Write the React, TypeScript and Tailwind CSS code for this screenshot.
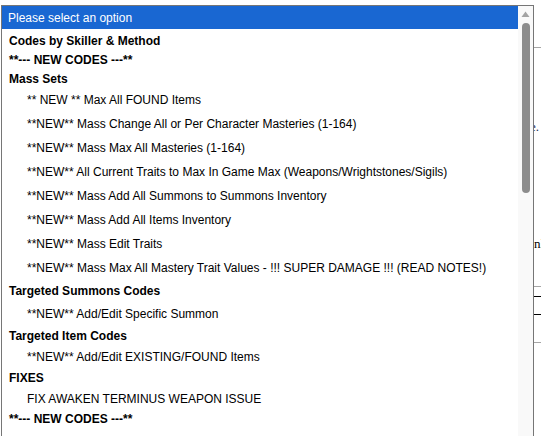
type Row = { label: string; kind: 'group' | 'option'; h: number };

const rows: Row[] = [
  { label: 'Codes by Skiller & Method', kind: 'group', h: 19 },
  { label: '**--- NEW CODES ---**', kind: 'group', h: 19 },
  { label: 'Mass Sets', kind: 'group', h: 19 },
  { label: '** NEW ** Max All FOUND Items', kind: 'option', h: 23 },
  { label: '**NEW** Mass Change All or Per Character Masteries (1-164)', kind: 'option', h: 24 },
  { label: '**NEW** Mass Max All Masteries (1-164)', kind: 'option', h: 24 },
  { label: '**NEW** All Current Traits to Max In Game Max (Weapons/Wrightstones/Sigils)', kind: 'option', h: 24 },
  { label: '**NEW** Mass Add All Summons to Summons Inventory', kind: 'option', h: 24 },
  { label: '**NEW** Mass Add All Items Inventory', kind: 'option', h: 24 },
  { label: '**NEW** Mass Edit Traits', kind: 'option', h: 24 },
  { label: '**NEW** Mass Max All Mastery Trait Values - !!! SUPER DAMAGE !!! (READ NOTES!)', kind: 'option', h: 24 },
  { label: 'Targeted Summons Codes', kind: 'group', h: 23 },
  { label: '**NEW** Add/Edit Specific Summon', kind: 'option', h: 22 },
  { label: 'Targeted Item Codes', kind: 'group', h: 22 },
  { label: '**NEW** Add/Edit EXISTING/FOUND Items', kind: 'option', h: 21 },
  { label: 'FIXES', kind: 'group', h: 21 },
  { label: 'FIX AWAKEN TERMINUS WEAPON ISSUE', kind: 'option', h: 21 },
  { label: '**--- NEW CODES ---**', kind: 'group', h: 19 },
];

function Scrollbar() {
  return (
    <div className="flex w-[15px] shrink-0 flex-col items-center bg-[#f9f9f9]">
      <svg width="9" height="7" viewBox="0 0 9 7" className="mt-[5px]">
        <polygon points="4.5,0.5 8.5,6 0.5,6" fill="#a3a3a3" />
      </svg>
      <div className="mt-[5px] h-[170px] w-[8px] rounded-full bg-[#8c8c8c]" />
    </div>
  );
}

function PageEdge() {
  return (
    <div className="flex w-[7px] shrink-0 flex-col overflow-hidden font-['Liberation_Serif',serif] text-[13px] leading-[13px]">
      <div className="mt-[47px] h-px bg-[#a6a6a6]" />
      <div className="mt-[72px] -ml-[4px] whitespace-nowrap text-[#1f2a55]">e.</div>
      <div className="mt-[104px] whitespace-nowrap text-black">nl</div>
      <div className="mt-[36px] h-px bg-[#a6a6a6]" />
      <div className="mt-[9px] h-px bg-black" />
      <div className="mt-[17px] h-px bg-black" />
      <div className="mt-[27px] h-px bg-[#a6a6a6]" />
    </div>
  );
}

export default function App() {
  return (
    <div className="flex h-[436px] w-[541px] overflow-hidden bg-white font-['Liberation_Sans',Arial,sans-serif] text-[12px] text-black">
      <div className="ml-[1px] mt-[5px] flex h-[460px] w-[533px] shrink-0 border border-[#767676]">
        <div className="flex min-w-0 flex-1 flex-col">
          <div className="flex h-[23px] items-center bg-[#1967d2] pl-[6px] pt-px text-white">
            Please select an option
          </div>
          <div className="flex flex-col pt-[3px]">
            {rows.map((row, i) => (
              <div
                key={i}
                style={{ height: row.h }}
                className={
                  row.kind === 'group'
                    ? 'flex items-center whitespace-nowrap pl-[7px] font-bold leading-[15px]'
                    : 'flex items-center whitespace-nowrap pl-[25px] leading-[15px]'
                }
              >
                {row.label}
              </div>
            ))}
          </div>
        </div>
        <Scrollbar />
      </div>
      <PageEdge />
    </div>
  );
}
